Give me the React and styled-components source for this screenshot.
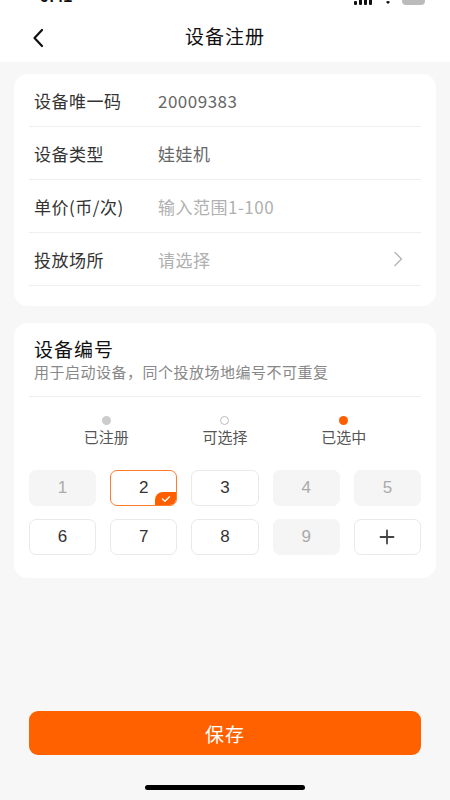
import React from "react";
import styled, { createGlobalStyle } from "styled-components";

const GlobalStyle = createGlobalStyle`
  html, body { margin: 0; padding: 0; background: #f7f7f7; }
  body { font-family: "Noto Sans CJK SC", "Noto Sans", sans-serif; -webkit-font-smoothing: antialiased; }
  * { box-sizing: border-box; }
`;

const Page = styled.div`
  width: 450px;
  height: 800px;
  display: flex;
  flex-direction: column;
  background: #f7f7f7;
  overflow: hidden;
`;

const StatusBar = styled.div`
  height: 5px;
  background: #fff;
  overflow: hidden;
  display: flex;
  align-items: flex-end;
  justify-content: space-between;
  padding: 0 22px 0 40px;
`;

const StatusTime = styled.div`
  font-family: "Liberation Sans", sans-serif;
  font-weight: 700;
  font-size: 16px;
  line-height: 16px;
  color: #111;
`;

const StatusIcons = styled.div`
  display: flex;
  align-items: flex-end;
  gap: 6px;
  height: 16px;
`;

const NavBar = styled.div`
  height: 57px;
  background: #fff;
  display: flex;
  align-items: center;
  justify-content: center;
  position: relative;
`;

const BackButton = styled.div`
  position: absolute;
  left: 28px;
  top: calc(50% + 4px);
  transform: translateY(-50%);
  width: 20px;
  height: 20px;
  display: flex;
  align-items: center;
  justify-content: center;
`;

const NavTitle = styled.div`
  font-size: 19px;
  color: #111;
  letter-spacing: 1px;
  margin-top: 4px;
`;

const Content = styled.div`
  flex: 1;
  display: flex;
  flex-direction: column;
  gap: 17px;
  padding: 12px 14px 0;
`;

const Card = styled.div`
  background: #fff;
  border-radius: 14px;
  padding: ${(p) => p.$padding || "0 15px 20px"};
`;

const FormRow = styled.div`
  height: 53px;
  display: flex;
  align-items: center;
  border-bottom: 1px solid #efefef;
  padding: 0 18px 0 5px;
  font-size: 17px;
  letter-spacing: 0.5px;
`;

const Label = styled.div`
  width: 124px;
  color: #333;
  flex-shrink: 0;
`;

const Value = styled.div`
  flex: 1;
  color: ${(p) => (p.$placeholder ? "#b0b0b0" : "#666")};
`;

const SectionHeader = styled.div`
  padding: 14px 5px 14px;
  border-bottom: 1px solid #efefef;
`;

const SectionTitle = styled.div`
  font-size: 19px;
  color: #111;
  line-height: 24px;
  letter-spacing: 1px;
`;

const SectionSub = styled.div`
  font-size: 15px;
  color: #888;
  line-height: 20px;
  margin-top: 1px;
  letter-spacing: 0.5px;
`;

const Legend = styled.div`
  display: grid;
  grid-template-columns: repeat(3, 1fr);
  padding: 19px 18px 23px;
`;

const LegendItem = styled.div`
  display: flex;
  flex-direction: column;
  align-items: center;
  gap: 2px;
`;

const Dot = styled.span`
  width: 9px;
  height: 9px;
  border-radius: 50%;
  background: ${(p) => (p.$kind === "registered" ? "#cccccc" : p.$kind === "selected" ? "#ff5e00" : "#fff")};
  border: ${(p) => (p.$kind === "available" ? "1px solid #bbb" : "none")};
`;

const LegendText = styled.div`
  font-size: 15px;
  color: #555;
  line-height: 20px;
`;

const Grid = styled.div`
  display: grid;
  grid-template-columns: repeat(5, 1fr);
  column-gap: 14px;
  row-gap: 13px;
`;

const Cell = styled.div`
  position: relative;
  height: 36px;
  border-radius: 7px;
  display: flex;
  align-items: center;
  justify-content: center;
  font-family: "Liberation Sans", sans-serif;
  font-size: 17px;
  background: ${(p) => (p.$kind === "registered" ? "#f5f5f5" : "#fff")};
  color: ${(p) => (p.$kind === "registered" ? "#aaa" : "#333")};
  border: 1px solid
    ${(p) => (p.$kind === "selected" ? "#ff7b2e" : p.$kind === "registered" ? "#f5f5f5" : "#e9e9e9")};
  overflow: hidden;
`;

const CheckBadge = styled.span`
  position: absolute;
  right: -1px;
  bottom: -1px;
  width: 22px;
  height: 14px;
  background: #ff5e00;
  border-top-left-radius: 8px;
  display: flex;
  align-items: center;
  justify-content: center;
`;

const Footer = styled.div`
  padding: 0 29px;
  display: flex;
  flex-direction: column;
  align-items: center;
`;

const SaveButton = styled.button`
  width: 100%;
  height: 44px;
  border: none;
  border-radius: 9px;
  background: #ff6100;
  color: #fff;
  font-family: "Noto Sans CJK SC", sans-serif;
  font-size: 19px;
  letter-spacing: 1px;
`;

const HomeIndicator = styled.div`
  width: 160px;
  height: 5px;
  border-radius: 3px;
  background: #000;
  margin: 30px 0 10px;
`;

const Chevron = () => (
  <svg width="10" height="16" viewBox="0 0 10 16" fill="none">
    <path d="M2 1.5 L8.5 8 L2 14.5" stroke="#b5b5b5" strokeWidth="1.4" strokeLinecap="round" strokeLinejoin="round" />
  </svg>
);

const numbers = [
  { n: "1", kind: "registered" },
  { n: "2", kind: "selected" },
  { n: "3", kind: "available" },
  { n: "4", kind: "registered" },
  { n: "5", kind: "registered" },
  { n: "6", kind: "available" },
  { n: "7", kind: "available" },
  { n: "8", kind: "available" },
  { n: "9", kind: "registered" },
  { n: "+", kind: "available" },
];

export default function App() {
  return (
    <Page>
      <GlobalStyle />
      <StatusBar>
        <StatusTime>9:41</StatusTime>
        <StatusIcons>
          <svg width="20" height="12" viewBox="0 0 20 12">
            <rect x="0" y="8" width="3" height="4" rx="1" fill="#111" />
            <rect x="5" y="6" width="3" height="6" rx="1" fill="#111" />
            <rect x="10" y="3" width="3" height="9" rx="1" fill="#111" />
            <rect x="15" y="0" width="3" height="12" rx="1" fill="#111" />
          </svg>
          <svg width="16" height="12" viewBox="0 0 16 12">
            <path d="M8 11 L6 9 A3 3 0 0 1 10 9 Z" fill="#111" />
          </svg>
          <svg width="26" height="12" viewBox="0 0 26 12">
            <rect x="0.5" y="0.5" width="22" height="11" rx="3" fill="#bbb" stroke="#bbb" />
          </svg>
        </StatusIcons>
      </StatusBar>
      <NavBar>
        <BackButton>
          <svg width="12" height="20" viewBox="0 0 12 20" fill="none">
            <path d="M10 2 L2.5 10 L10 18" stroke="#111" strokeWidth="2.2" strokeLinecap="round" strokeLinejoin="round" />
          </svg>
        </BackButton>
        <NavTitle>设备注册</NavTitle>
      </NavBar>
      <Content>
        <Card>
          <FormRow>
            <Label>设备唯一码</Label>
            <Value>20009383</Value>
          </FormRow>
          <FormRow>
            <Label>设备类型</Label>
            <Value>娃娃机</Value>
          </FormRow>
          <FormRow>
            <Label>单价(币/次)</Label>
            <Value $placeholder>输入范围1-100</Value>
          </FormRow>
          <FormRow>
            <Label>投放场所</Label>
            <Value $placeholder>请选择</Value>
            <Chevron />
          </FormRow>
        </Card>
        <Card $padding="0 15px 23px">
          <SectionHeader>
            <SectionTitle>设备编号</SectionTitle>
            <SectionSub>用于启动设备，同个投放场地编号不可重复</SectionSub>
          </SectionHeader>
          <Legend>
            <LegendItem>
              <Dot $kind="registered" />
              <LegendText>已注册</LegendText>
            </LegendItem>
            <LegendItem>
              <Dot $kind="available" />
              <LegendText>可选择</LegendText>
            </LegendItem>
            <LegendItem>
              <Dot $kind="selected" />
              <LegendText>已选中</LegendText>
            </LegendItem>
          </Legend>
          <Grid>
            {numbers.map((c) => (
              <Cell key={c.n} $kind={c.kind}>
                {c.n === "+" ? (
                  <svg width="16" height="16" viewBox="0 0 16 16">
                    <path d="M8 1.5 V14.5 M1.5 8 H14.5" stroke="#444" strokeWidth="1.8" strokeLinecap="round" />
                  </svg>
                ) : (
                  c.n
                )}
                {c.kind === "selected" && (
                  <CheckBadge>
                    <svg width="10" height="8" viewBox="0 0 10 8" fill="none">
                      <path d="M1.5 4 L4 6.2 L8.5 1.8" stroke="#fff" strokeWidth="1.4" strokeLinecap="round" strokeLinejoin="round" />
                    </svg>
                  </CheckBadge>
                )}
              </Cell>
            ))}
          </Grid>
        </Card>
      </Content>
      <Footer>
        <SaveButton>保存</SaveButton>
        <HomeIndicator />
      </Footer>
    </Page>
  );
}
